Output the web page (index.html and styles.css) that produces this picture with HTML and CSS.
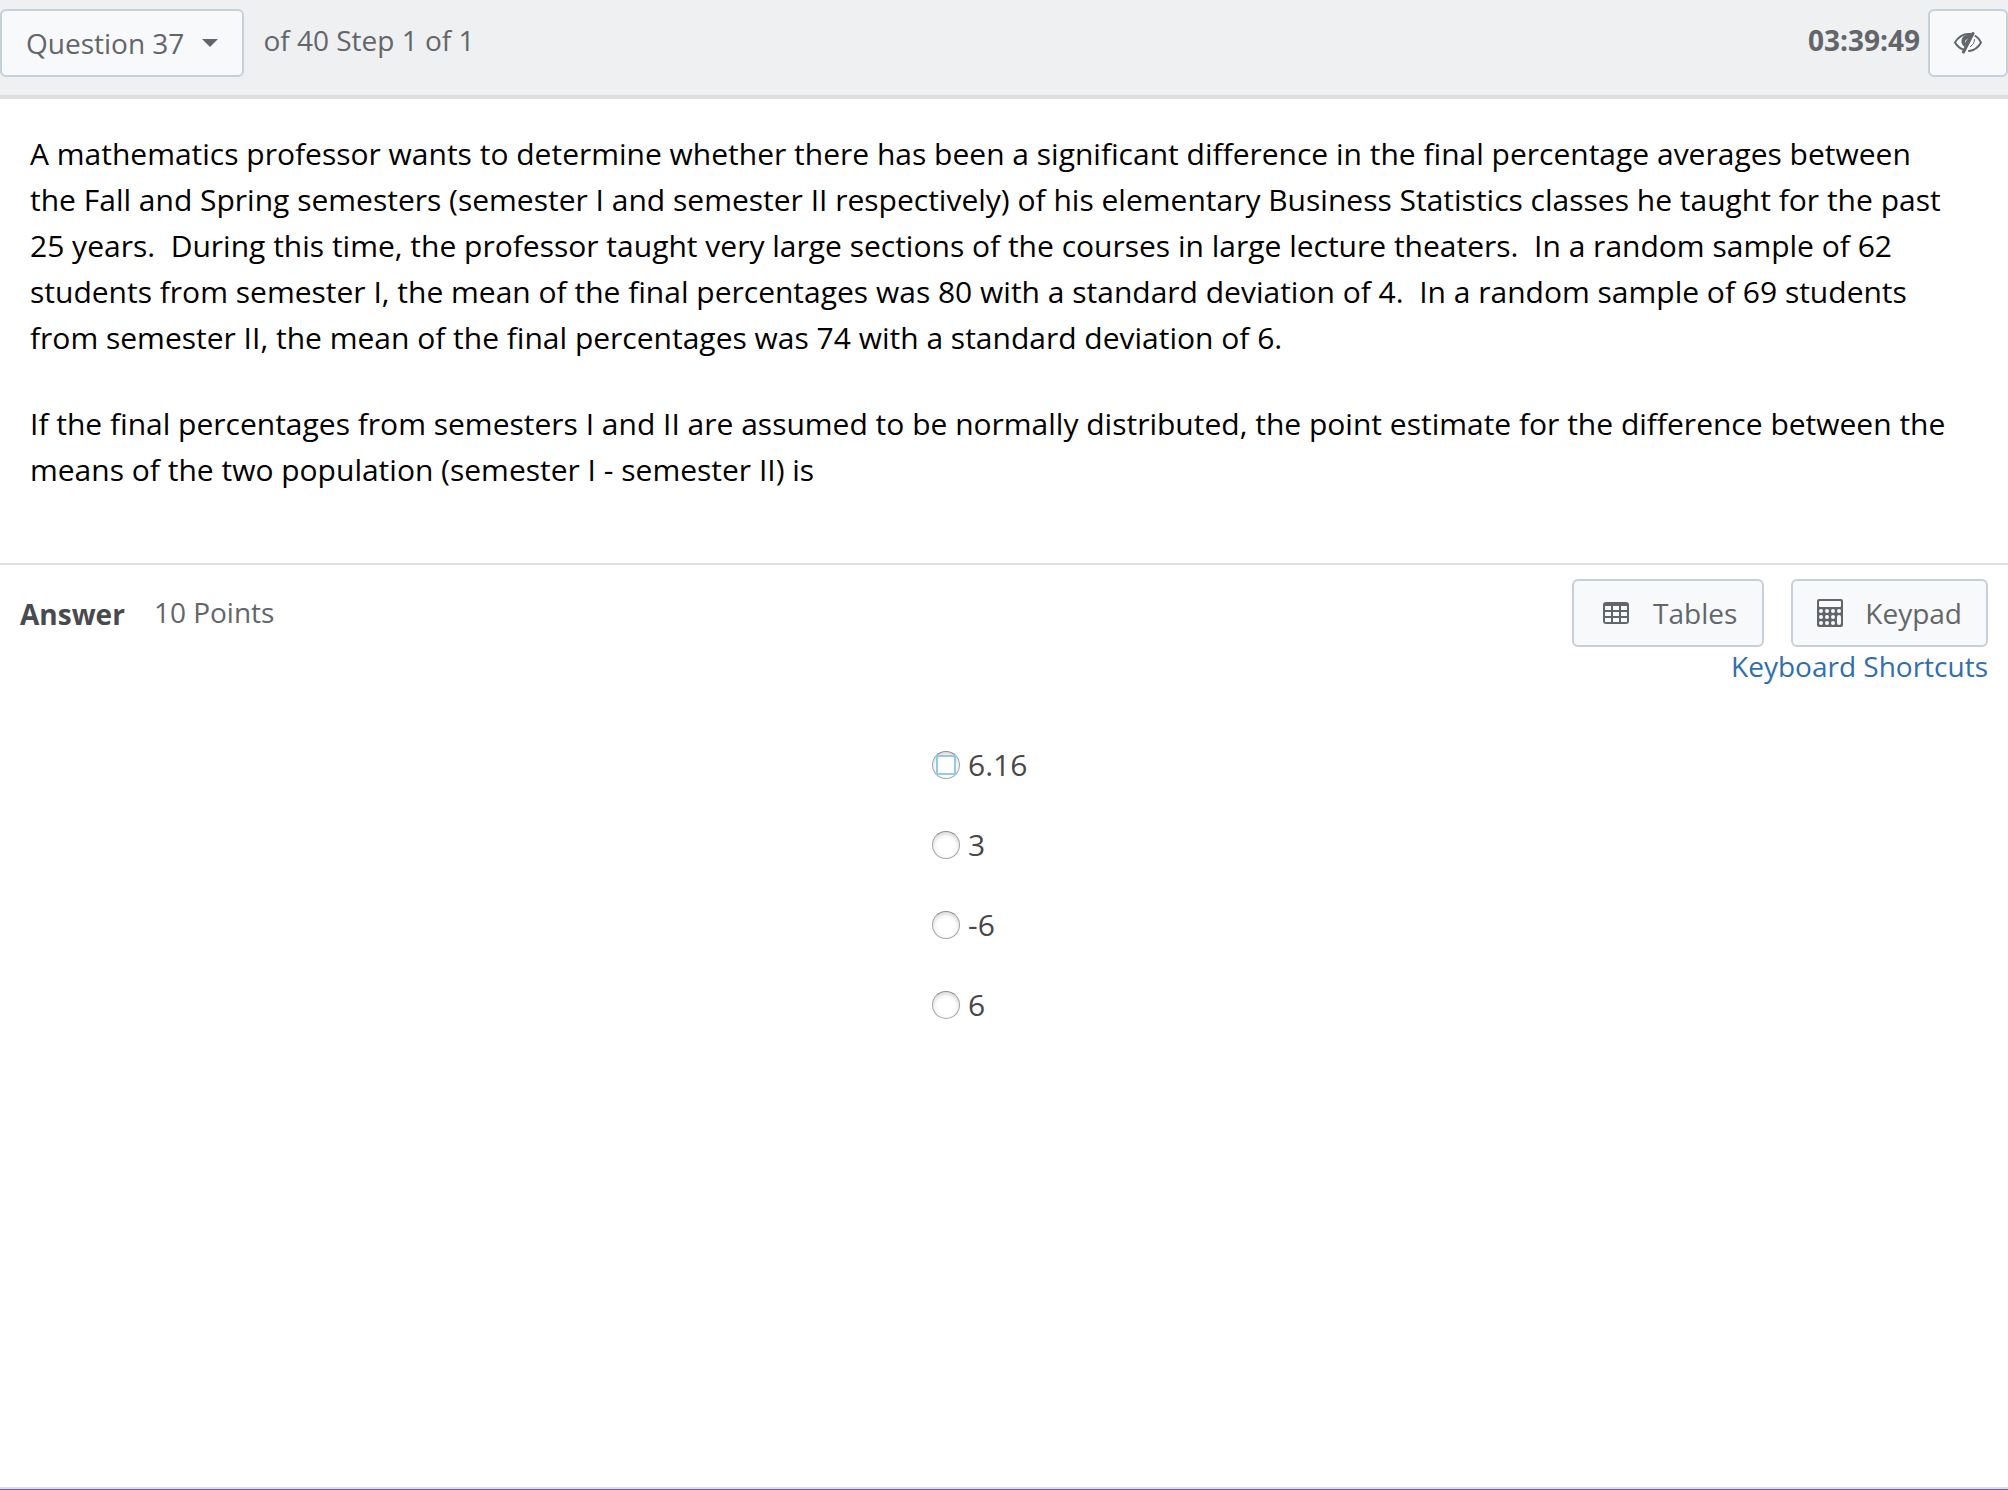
FILE: index.html
```html
<!DOCTYPE html>
<html lang="en">
<head>
    <meta charset="UTF-8">
    <meta name="viewport" content="width=device-width, initial-scale=1.0">
    <title>Question 37 of 40</title>
    <link rel="stylesheet" href="styles.css">
</head>
<body>
    <header class="topbar">
        <button class="btn question-btn" type="button">Question 37 <span class="caret"></span></button>
        <span class="step">of 40 Step 1 of 1</span>
        <span class="timer">03:39:49</span>
        <button class="btn eye-btn" type="button" aria-label="Hide timer">
            <svg width="28" height="22" viewBox="0 0 28 22" fill="none" stroke="#62666b" stroke-width="2" stroke-linecap="round">
                <path d="M9 17.500C5 16 2.500 13 1 10.500C4 5.500 9 2 14.500 2H17"/>
                <path d="M9.500 5C7 8 7.500 12 10.500 14.500L17.500 3C14 3 11 3.500 9.500 5Z" fill="#62666b" stroke-width="1"/>
                <path d="M9.500 20L19 1.500" stroke-width="3"/>
                <path d="M13 7.500C12 8 11.500 9 11.500 10" stroke="#f8f9fb" stroke-width="1"/>
                <path d="M21.500 4C24 5.500 26 8 27 10.500C24.500 15 20.500 18.500 15 19"/>
                <path d="M20.500 7.500C20.500 10.500 19 13 16.500 14.500" stroke-width="1"/>
            </svg>
        </button>
    </header>

    <main>
        <section class="question">
            <p>A mathematics professor wants to determine whether there has been a significant difference in the final percentage averages between the Fall and Spring semesters (semester I and semester II respectively) of his elementary Business Statistics classes he taught for the past 25 years.&nbsp; During this time, the professor taught very large sections of the courses in large lecture theaters.&nbsp; In a random sample of 62 students from semester I, the mean of the final percentages was 80 with a standard deviation of 4.&nbsp; In a random sample of 69 students from semester II, the mean of the final percentages was 74 with a standard deviation of 6.</p>
            <p>If the final percentages from semesters I and II are assumed to be normally distributed, the point estimate for the difference between the means of the two population (semester I - semester II) is</p>
        </section>

        <section class="answer">
            <div class="answer-head">
                <h2>Answer</h2>
                <span class="points">10 Points</span>
                <div class="tools">
                    <div class="tool-buttons">
                        <button class="btn tables-btn" type="button">
                            <svg width="26" height="22" viewBox="0 0 26 22">
                                <rect width="26" height="22" rx="3" fill="#62666b"/>
                                <path d="M2 4h6v4H2zM10 4h6v4h-6zM18 4h6v4h-6zM2 10h6v4H2zM10 10h6v4h-6zM18 10h6v4h-6zM2 16h6v4H2zM10 16h6v4h-6zM18 16h6v4h-6z" fill="#f8f9fb"/>
                            </svg>
                            Tables
                        </button>
                        <button class="btn keypad-btn" type="button">
                            <svg width="26" height="28" viewBox="0 0 26 28">
                                <rect width="26" height="28" rx="2" fill="#62666b"/>
                                <g fill="#f8f9fb">
                                    <rect x="2" y="2" width="22" height="6" rx="1"/>
                                    <circle cx="4" cy="12" r="2"/><circle cx="10" cy="12" r="2"/><circle cx="16" cy="12" r="2"/><circle cx="22" cy="12" r="2"/>
                                    <circle cx="4" cy="18" r="2"/><circle cx="10" cy="18" r="2"/><circle cx="16" cy="18" r="2"/>
                                    <circle cx="4" cy="24" r="2"/><circle cx="10" cy="24" r="2"/><circle cx="16" cy="24" r="2"/>
                                    <rect x="20" y="16" width="4" height="10" rx="2"/>
                                </g>
                            </svg>
                            Keypad
                        </button>
                    </div>
                    <a href="#shortcuts">Keyboard Shortcuts</a>
                </div>
            </div>

            <form class="options">
                <label><input class="focused" type="radio" name="answer" value="6.16">6.16</label>
                <label><input type="radio" name="answer" value="3">3</label>
                <label><input type="radio" name="answer" value="-6">-6</label>
                <label><input type="radio" name="answer" value="6">6</label>
            </form>
        </section>
    </main>

    <footer class="bottom"></footer>
</body>
</html>
```

FILE: styles.css
```css
*,
*::before {
    box-sizing: border-box;
}

body {
    margin: 0;
    min-height: 100vh;
    display: flex;
    flex-direction: column;
    background: #fff;
    color: #62666b;
    font-family: "Open Sans", sans-serif;
    font-size: 28px;
    line-height: 38px;
}

main {
    flex: 1;
}

.btn {
    display: flex;
    align-items: center;
    height: 68px;
    padding: 0 24px 1px;
    background: #f8f9fb;
    border: 2px solid #c4d1da;
    border-radius: 6px;
    color: #62666b;
    font: inherit;
    cursor: pointer;
}

.topbar {
    display: flex;
    align-items: flex-start;
    padding-top: 9px;
    height: 99px;
    background: #eff0f2;
    border-bottom: 4px solid #dedfe0;
}

.question-btn {
    gap: 18px;
}

.caret {
    border: 8px solid transparent;
    border-top-color: #62666b;
    border-bottom: 0;
}

.step {
    margin-left: 19px;
    padding-top: 12px;
}

.timer {
    margin-left: auto;
    padding-top: 12px;
    font-weight: 700;
}

.eye-btn {
    width: 80px;
    margin-left: 8px;
    justify-content: center;
    padding: 0;
}

.question {
    padding: 32px 48px 70px 30px;
    border-bottom: 2px solid #dedfe0;
    color: #000;
    font-size: 30px;
    line-height: 46px;
}

.question p {
    margin: 0 0 40px;
}

.question p:last-child {
    margin-bottom: 0;
}

.answer-head {
    display: flex;
    align-items: flex-start;
    padding: 14px 20px 0;
}

.answer-head h2 {
    margin: 0;
    padding-top: 16px;
    color: #484a4d;
    font-size: 28px;
}

.points {
    margin-left: 29px;
    padding-top: 14px;
}

.tools {
    margin-left: auto;
    text-align: right;
}

.tool-buttons {
    display: flex;
    gap: 27px;
}

.tables-btn {
    gap: 24px;
    padding: 0 25px 1px 29px;
}

.keypad-btn {
    gap: 22px;
}

.tools a {
    display: block;
    color: #2f6fae;
    text-decoration: none;
}

.options {
    display: grid;
    gap: 40px;
    width: 144px;
    margin: 60px auto 0;
    color: #484848;
    font-size: 30px;
    line-height: 40px;
}

.options label {
    display: flex;
    align-items: center;
    gap: 8px;
}

.options input {
    appearance: none;
    display: grid;
    place-items: center;
    width: 28px;
    height: 28px;
    margin: 0;
    background: #fff;
    border: 1px solid #a6a6a6;
    border-top-color: #8e8e8e;
    border-radius: 50%;
    box-shadow: inset 0 2px 4px #d4d4d4;
}

.options .focused::before {
    content: "";
    width: 20px;
    height: 20px;
    border: 2px solid #92cbe4;
}

.options input:checked {
    background: radial-gradient(#2f6fae 40%, #fff 45%);
}

.bottom {
    height: 3px;
    background: #dedfe0;
    border-bottom: 1px solid #6a57a5;
}
```
